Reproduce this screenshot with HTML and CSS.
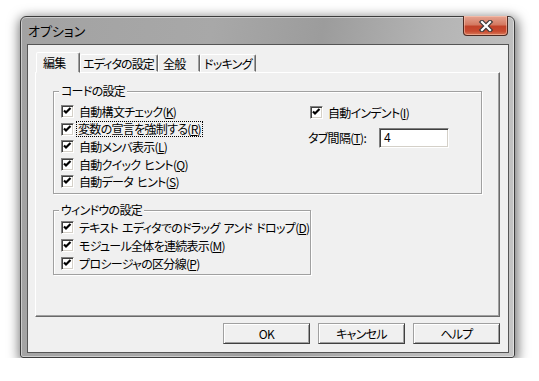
FILE: index.html
```html
<!DOCTYPE html>
<html lang="ja">
<head>
    <meta charset="UTF-8">
    <title>オプション</title>
    <link rel="stylesheet" href="styles.css">
</head>
<body>
    <svg width="0" height="0" class="defs">
        <symbol id="chk" viewBox="0 0 11 11">
            <polyline points="2,4.5 4,6.5 8.5,2" fill="none" stroke="#000" stroke-width="2.2"/>
        </symbol>
    </svg>

    <div class="desktop">
        <div class="window">
            <div class="titlebar">
                <span class="title">オプション</span>
                <div class="close">
                    <svg width="18" height="12" viewBox="0 0 18 12">
                        <path d="M5 2 L13 10 M13 2 L5 10" stroke="#3a3a3a" stroke-width="4.5" stroke-linecap="square"/>
                        <path d="M5 2 L13 10 M13 2 L5 10" stroke="#fff" stroke-width="2.2" stroke-linecap="square"/>
                    </svg>
                </div>
            </div>

            <div class="client">
                <div class="tabs">
                    <div class="tab active">編集</div>
                    <div class="tab tab-editor">エディタの設定</div>
                    <div class="tab tab-general">全般</div>
                    <div class="tab tab-dock">ドッキング</div>
                </div>

                <div class="panel">
                    <div class="group group-code">
                        <span class="legend">コードの設定</span>
                        <div class="col col-left">
                            <label class="check"><span class="box"><svg><use href="#chk"/></svg></span><span>自動構文チェック(<u>K</u>)</span></label>
                            <label class="check"><span class="box"><svg><use href="#chk"/></svg></span><span class="focus">変数の宣言を強制する(<u>R</u>)</span></label>
                            <label class="check"><span class="box"><svg><use href="#chk"/></svg></span><span>自動メンバ表示(<u>L</u>)</span></label>
                            <label class="check"><span class="box"><svg><use href="#chk"/></svg></span><span>自動クイック ヒント(<u>Q</u>)</span></label>
                            <label class="check"><span class="box"><svg><use href="#chk"/></svg></span><span>自動データ ヒント(<u>S</u>)</span></label>
                        </div>
                        <div class="col col-right">
                            <label class="check"><span class="box"><svg><use href="#chk"/></svg></span><span>自動インデント(<u>I</u>)</span></label>
                            <div class="field">
                                <span class="field-label">タブ間隔(<u>T</u>):</span>
                                <span class="input">4</span>
                            </div>
                        </div>
                    </div>

                    <div class="group group-window">
                        <span class="legend">ウィンドウの設定</span>
                        <div class="col">
                            <label class="check row18"><span class="box"><svg><use href="#chk"/></svg></span><span>テキスト エディタでのドラッグ アンド ドロップ(<u>D</u>)</span></label>
                            <label class="check row18"><span class="box"><svg><use href="#chk"/></svg></span><span>モジュール全体を連続表示(<u>M</u>)</span></label>
                            <label class="check row18"><span class="box"><svg><use href="#chk"/></svg></span><span>プロシージャの区分線(<u>P</u>)</span></label>
                        </div>
                    </div>
                </div>

                <div class="buttons">
                    <div class="btn">OK</div>
                    <div class="btn">キャンセル</div>
                    <div class="btn">ヘルプ</div>
                </div>
            </div>
        </div>
    </div>
</body>
</html>
```

FILE: styles.css
```css
body {
    margin: 0;
    background: #fff;
    font-family: "Noto Sans CJK JP", "Liberation Sans", sans-serif;
    font-size: 12px;
    font-feature-settings: "palt";
    letter-spacing: -0.7px;
    word-spacing: 2px;
    color: #000;
}

.defs {
    position: absolute;
}

.desktop {
    padding: 16px 0 0 20px;
}

/* 外枠 */
.window {
    width: 495px;
    height: 342px;
    box-sizing: border-box;
    border: 1px solid #3c3c3c;
    border-radius: 6px 6px 3px 3px;
    background: linear-gradient(100deg, #a2a2a2 0%, #a8a8a8 35%, #9c9c9c 55%, #b4b4b4 75%, #c6c6c6 100%);
    box-shadow: 1px 3px 12px 2px rgba(0, 0, 0, 0.55), inset 0 0 0 1px rgba(255, 255, 255, 0.45);
    padding: 0 5px 4px 6px;
    display: flex;
    flex-direction: column;
}

.titlebar {
    height: 27px;
    display: flex;
    justify-content: space-between;
    align-items: flex-start;
}

.title {
    font-size: 13px;
    line-height: 28px;
    padding-left: 1px;
    letter-spacing: 0;
}

.close {
    width: 45px;
    height: 20px;
    box-sizing: border-box;
    margin-top: -1px;
    margin-right: 1px;
    border: 1px solid #4d2a22;
    border-top: none;
    border-radius: 0 0 4px 4px;
    background: linear-gradient(#e6a593 0%, #d47a62 45%, #c2432a 55%, #c84a30 80%, #d77a5a 100%);
    box-shadow: inset 0 0 0 1px rgba(255, 210, 190, 0.5);
    display: flex;
    justify-content: center;
    align-items: center;
}

.client {
    flex: 1;
    background: #f0f0f0;
    border: 1px solid #555;
    padding: 7px 8px 0 7px;
}

/* タブ */
.tabs {
    display: flex;
    align-items: flex-end;
    height: 20px;
    padding-left: 1px;
    position: relative;
    z-index: 1;
}

.tab {
    height: 18px;
    box-sizing: border-box;
    border: 1px solid;
    border-color: #fff #696969 transparent #fff;
    border-radius: 2px 2px 0 0;
    box-shadow: inset -1px 0 #a0a0a0;
    padding: 2px 0 0 3px;
    line-height: 14px;
    white-space: nowrap;
}

.tab.active {
    width: 44px;
    height: 21px;
    margin-bottom: -1px;
    background: #f0f0f0;
    padding: 3px 0 0 6px;
}

.tab-editor {
    width: 78px;
    padding-left: 2px;
    letter-spacing: -0.9px;
}

.tab-general {
    width: 42px;
    padding-left: 4px;
}

.tab-dock {
    width: 56px;
}

.panel {
    height: 245px;
    box-sizing: border-box;
    border: 1px solid;
    border-color: #fff #696969 #696969 #fff;
    box-shadow: inset -1px -1px #a0a0a0;
    padding: 18px 0 0 17px;
}

/* グループ */
.group {
    position: relative;
    box-sizing: border-box;
    border: 1px solid #a0a0a0;
    box-shadow: inset 1px 1px #fff, 1px 1px #fff;
    display: flex;
}

.legend {
    position: absolute;
    top: -8px;
    left: 5px;
    padding: 0 2px;
    background: #f0f0f0;
    line-height: 14px;
}

.group-code {
    width: 429px;
    height: 103px;
    padding: 11px 0 0 7px;
}

.group-window {
    width: 258px;
    height: 65px;
    margin-top: 16px;
    padding: 7px 0 0 7px;
}

.col {
    display: flex;
    flex-direction: column;
}

.col-left {
    width: 249px;
}

.col-right {
    padding-top: 1px;
}

.check {
    display: flex;
    align-items: center;
    gap: 5px;
    height: 17.5px;
    white-space: nowrap;
}

.check.row18 {
    height: 18px;
}

.box {
    width: 13px;
    height: 13px;
    box-sizing: border-box;
    border: 1px solid;
    border-color: #808080 #fff #fff #808080;
    box-shadow: inset 1px 1px #404040, inset -1px -1px #d4d0c8;
    background: #fff;
    flex: none;
    display: flex;
    justify-content: center;
    align-items: center;
}

.box svg {
    width: 11px;
    height: 11px;
}

.focus {
    outline: 1px dotted #000;
    padding: 0 1px;
    margin-left: -2px;
    line-height: 14px;
}

.field {
    display: flex;
    align-items: center;
    margin-top: 6px;
    margin-left: -2px;
}

.field-label {
    width: 71px;
}

.input {
    width: 70px;
    height: 20px;
    box-sizing: border-box;
    border: 1px solid;
    border-color: #808080 #fff #fff #808080;
    box-shadow: inset 1px 1px #404040, inset -1px -1px #d4d0c8;
    background: #fff;
    padding: 0 4px;
    line-height: 18px;
    font-family: "Liberation Sans", sans-serif;
}

/* ボタン */
.buttons {
    display: flex;
    justify-content: flex-end;
    gap: 8px;
    margin-top: 6px;
}

.btn {
    width: 87px;
    height: 21px;
    box-sizing: border-box;
    border: 1px solid;
    border-color: #a0a0a0 #404040 #404040 #a0a0a0;
    box-shadow: inset 1px 1px #fff, inset -1px -1px #a0a0a0;
    text-align: center;
    line-height: 19px;
}
```
